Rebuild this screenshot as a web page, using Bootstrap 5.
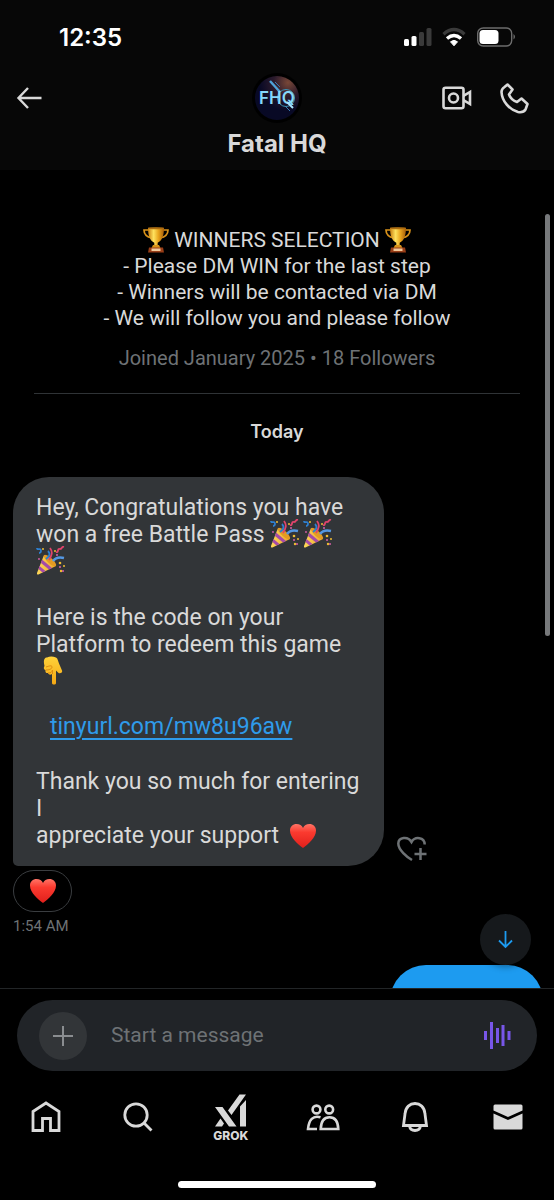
<!DOCTYPE html>
<html lang="en" data-bs-theme="dark">
<head>
<meta charset="utf-8">
<meta name="viewport" content="width=device-width, initial-scale=1">
<title>Fatal HQ</title>
<link href="https://cdn.jsdelivr.net/npm/bootstrap@5.3.0/dist/css/bootstrap.min.css" rel="stylesheet">
<style>
  body { background: #000; color: #d9d9d9; font-family: Roboto, "Liberation Sans", sans-serif; font-size: 23px; line-height: 27px; }
  svg { display: block; }
  .plain { background: none; border: 0; padding: 0; color: inherit; }
  .topbar { background: #070707; height: 170px; }
  .status { height: 74px; padding: 0 38px 0 59px; color: #fff; }
  .clock { font-family: Inter, sans-serif; font-weight: 600; font-size: 24px; }
  .side { width: 88px; }
  .titlebar { padding: 0 25px 0 16px; height: 48px; }
  .side-start { width: 97px; }
  .person { font-family: Inter, sans-serif; font-size: 24px; font-weight: 700; line-height: 28px; margin-top: 8px; }
  .bio { line-height: 26px; font-size: 21px; padding-top: 57px; }
  .dim { color: #6e7275; }
  .joined { font-size: 20px; line-height: 26px; margin-top: 14px; }
  .divider { border-top: 1px solid #2f3336; margin: 22px 34px 0; }
  .day { font-family: Inter, sans-serif; font-size: 18px; font-weight: 600; margin-top: 24px; }
  .bubble { width: 67%; margin: 32px 0 0 13px; padding: 17px 10px 17px 23px; background: #323538; border-radius: 36px 36px 36px 5px; }
  .bubble p { margin: 0 0 28px; }
  .bubble p:first-child { margin-bottom: 29px; }
  .bubble p:last-child { margin: 0; }
  .bubble a { color: #2f9bea; margin-left: 14px; text-decoration-thickness: 2px; text-underline-offset: 4px; }
  .emo { display: inline-block; width: 29px; height: 29px; margin-top: -5px; vertical-align: -6px; }
  .emo-gap { margin-right: 4px; }
  .emo-sm { width: 26px; height: 26px; }
  .react-add { margin: 0 0 4px 13px; }
  .reaction { width: 59px; height: 42px; border: 1px solid #3a3d40; border-radius: 21px; background: #000; margin: 4px 0 0 13px; }
  .stamp { font-size: 15px; line-height: 20px; margin: 4px 0 0 13px; }
  .reply { width: 153px; height: 72px; margin: 29px 11px 0 auto; background: #1d9bf0; border-radius: 36px; }
  .jump { right: 23px; bottom: 23px; width: 51px; height: 51px; background: #16191c; color: #1d9bf0; box-shadow: 0 2px 6px rgba(0,0,0,.35); }
  .thumb { right: 4px; top: 44px; width: 5px; height: 422px; background: #77797b; }
  .composer { border-top: 1px solid #222527; padding: 11px 17px 0; }
  .field { height: 71px; background: #212428; padding: 0 26px 0 22px; border-radius: 36px; }
  .add { width: 48px; height: 48px; background: #323538; color: #8a8d90; }
  .field input { background: none; border: 0; outline: 0; color: inherit; font-size: 21px; padding: 0 0 0 24px; min-width: 0; }
  .field input::placeholder { color: #6e7275; opacity: 1; }
  .tabs { height: 110px; padding-top: 20px; }
  .tabs a { color: #d9d9d9; height: 52px; }
  .grok { font-family: Inter, sans-serif; font-size: 12px; font-weight: 800; line-height: 14px; margin-top: 2px; }
  .homebar { width: 198px; height: 7px; border-radius: 4px; background: #fff; margin: 0 auto 12px; }
</style>
</head>
<body>
<svg width="0" height="0" class="position-absolute" aria-hidden="true">
  <defs>
    <linearGradient id="gold"><stop offset="0" stop-color="#c87d10"/><stop offset=".35" stop-color="#ffe25e"/><stop offset=".65" stop-color="#e9a51d"/><stop offset="1" stop-color="#a85d08"/></linearGradient>
    <linearGradient id="red" x2="0" y2="1"><stop offset="0" stop-color="#ff7466"/><stop offset=".35" stop-color="#fb3a2f"/><stop offset="1" stop-color="#e0201c"/></linearGradient>
    <linearGradient id="cone"><stop offset="0" stop-color="#ffd95a"/><stop offset="1" stop-color="#eba52a"/></linearGradient>
    <linearGradient id="skin" x2="0" y2="1"><stop offset="0" stop-color="#ffd23a"/><stop offset="1" stop-color="#f5a814"/></linearGradient>
    <symbol id="trophy" viewBox="0 0 26 26">
      <path d="M6 3H1c0 5 3 7 8 8M20 3h5c0 5-3 7-8 8" fill="none" stroke="#d9921a" stroke-width="1.7"/>
      <path d="M5 0.8h16c0 8-2 13-6.300 15v3h-3.400v-3C7 13.800 5 8.800 5 .8Z" fill="url(#gold)"/>
      <ellipse cx="13" cy="1.200" rx="8" ry="1" fill="#ad6c10"/>
      <path d="M10 18h6l1.500 3h-9Z" fill="#d9921a"/><path d="M6 20.500h14l1 5H5Z" fill="#9a3e17"/><path d="M8.500 21.500h9v2.500h-9Z" fill="#f2c99a"/>
    </symbol>
    <symbol id="party" viewBox="0 0 29 29">
      <path d="M8 9 20 20 2.500 28.400Q.5 29 1 27Z" fill="url(#cone)"/>
      <path d="m6 13.500 10 8.500-3 1.500L5 17ZM3.500 20l6 5-3 1.400-4-3.400Z" fill="#a54ba8"/>
      <ellipse cx="14" cy="14.500" rx="8" ry="2.600" transform="rotate(42 14 14.500)" fill="#e39b23"/>
      <path d="M10 13c3-2 5-5 2-8M1 2c0 3 4-1 4 3 0 2-2 2-2 2" fill="none" stroke="#2e7fd0" stroke-width="1.800"/>
      <path d="M13 14c3-5 4-8 1-12M20 6c3 1 1-4 4-3 3 0 1-3 4-2" fill="none" stroke="#e0446c" stroke-width="1.800"/>
      <path d="M17 15c3-4 7-4 11-3" fill="none" stroke="#5497e2" stroke-width="2.400"/>
      <g fill="#f0bc32"><circle cx="7" cy="3" r="1"/><circle cx="24" cy="17" r="1.300"/><circle cx="28" cy="20" r="1"/><circle cx="25" cy="25" r="1.200"/><circle cx="19" cy="5" r="1"/></g>
      <g fill="#d95fa8"><circle cx="27" cy="25" r="1"/><circle cx="3" cy="13" r=".9"/><circle cx="21" cy="9" r="1"/><circle cx="24" cy="21" r="1"/></g>
    </symbol>
    <symbol id="point" viewBox="0 0 29 29">
      <path transform="translate(2)" d="M9 1.500q4-2 9 0c2 1 2 4 3 6l3 7c1 2-2 4-4 2l-2-2V27c0 2-4 2-4 0v-9c-2 1.500-4 0-4-1-2 .5-3-1-2.500-3-2-.5-2-2.500-1-4-1-4-1-7 1.500-8.500Z" fill="url(#skin)"/>
      <path transform="translate(2)" d="M8 11c3-1 6-2 6 0s-3 3-6 3M10 17c3 0 4-1 4.500-3M14.500 18v-4" fill="none" stroke="#dc8c10"/>
    </symbol>
    <symbol id="heart" viewBox="0 0 26 26"><path d="M13 25C8 21 0 15 0 7.500 0 3.500 3 1 6.500 1 9.500 1 12 2.500 13 5c1-2.500 3.500-4 6.500-4C23 1 26 3.500 26 7.500 26 15 18 21 13 25Z" fill="url(#red)"/></symbol>
  </defs>
</svg>

<div class="d-flex flex-column vh-100 overflow-hidden">
  <header class="topbar flex-shrink-0">
    <div class="status d-flex align-items-center justify-content-between">
      <span class="clock">12:35</span>
      <div class="d-flex align-items-center" aria-label="Signal, Wi-Fi and battery">
        <svg class="me-2" width="30" height="20" viewBox="0 0 30 20"><g fill="#fff"><rect x="0" y="12" width="5" height="7" rx="1.500"/><rect x="7.500" y="9" width="5" height="10" rx="1.500"/></g><g fill="#3a3a3a"><rect x="15" y="5" width="5" height="14" rx="1.500"/><rect x="22.500" y="1" width="5" height="18" rx="1.500"/></g></svg>
        <svg class="me-2" width="26" height="20" viewBox="0 0 26 20" fill="none" stroke-width="3.400"><path d="M1.500 7.200Q12-2 22.500 7.200" stroke="#3a3a3a"/><path d="M5 11.500q7-6 14 0" stroke="#fff"/><path d="M8.500 14.800q3.500-3 7 0l-3.500 4Z" fill="#fff" stroke="#fff" stroke-width="1"/></svg>
        <svg width="40" height="20" viewBox="0 0 40 20"><rect x="1.700" y="1" width="34" height="18" rx="5.500" fill="none" stroke="#6c6c6c" stroke-width="1.400"/><rect x="3.500" y="3" width="19" height="14" rx="3.500" fill="#fff"/><path d="M37.500 7q3 2.700 0 5.500Z" fill="#6c6c6c"/></svg>
      </div>
    </div>
    <div class="titlebar d-flex align-items-center justify-content-between">
      <div class="side-start d-flex align-items-center"><button class="plain" aria-label="Back"><svg width="26" height="22" viewBox="0 0 26 22" fill="none" stroke="currentColor" stroke-width="2.400"><path d="M12 1 2.500 11 12 21M3 11h22.500"/></svg></button></div>
      <svg width="50" height="50" viewBox="0 0 50 50" role="img" aria-label="Fatal HQ avatar">
        <defs><radialGradient id="sky" cx=".75" cy=".15" r=".65"><stop offset="0" stop-color="#784737"/><stop offset=".5" stop-color="#2b1a2c"/><stop offset="1" stop-color="#080925"/></radialGradient></defs>
        <circle cx="25" cy="25" r="25" fill="#000"/><circle cx="25" cy="25" r="22" fill="url(#sky)"/>
        <path d="m18 8 10 11" stroke="#4fa3d8" stroke-width="2.400"/><path d="m23 9 5 5M33 33l5 5" stroke="#3a78b0" stroke-width="1"/>
        <circle cx="34" cy="25" r="8.500" fill="none" stroke="#3a91b5" stroke-width="1"/>
        <text x="7" y="31" font-family="Inter, sans-serif" font-size="17" font-weight="600" fill="#86d8fa">FHQ</text><path d="m35 29 6 6" stroke="#a9e4ff" stroke-width="2"/>
      </svg>
      <div class="side d-flex justify-content-between align-items-center">
        <button class="plain" aria-label="Video call"><svg width="31" height="24" viewBox="0 0 31 24" fill="none" stroke="currentColor" stroke-width="2.600"><rect x="2.500" y="1.700" width="20" height="20.500" rx="2"/><circle cx="12.500" cy="12" r="4.500"/><path d="M22.500 9.800 29 6v12l-6.500-3.800"/></svg></button>
        <button class="plain" aria-label="Audio call"><svg width="29" height="31" viewBox="0 0 29 31" fill="none" stroke="currentColor" stroke-width="2.600" stroke-linejoin="round"><path d="M7.500 1.500 12.500 6.500 9 11.500c1.500 4 4.500 6.500 8 7.500l4.500-3.500 6 5.500-2 5.500c-1.500 2.500-4.500 3-7.500 2.500C9 26.500 2 18 1.500 9c0-3 1.500-4 3-5Z"/></svg></button>
      </div>
    </div>
    <div class="person text-center">Fatal HQ</div>
  </header>

  <main class="flex-fill overflow-hidden position-relative">
    <div class="bio text-center">
      <svg class="emo emo-sm" role="img" aria-label="🏆"><use href="#trophy"/></svg> WINNERS SELECTION <svg class="emo emo-sm" role="img" aria-label="🏆"><use href="#trophy"/></svg><br>
      - Please DM WIN for the last step<br>
      - Winners will be contacted via DM<br>
      - We will follow you and please follow
    </div>
    <div class="joined dim text-center">Joined January 2025 • 18 Followers</div>
    <div class="divider"></div>
    <div class="day text-center">Today</div>
    <div class="d-flex align-items-end">
      <div class="bubble">
        <p>Hey, Congratulations you have<br>won a free Battle Pass <svg class="emo emo-gap" role="img" aria-label="🎉"><use href="#party"/></svg><svg class="emo" role="img" aria-label="🎉"><use href="#party"/></svg><br><svg class="emo" role="img" aria-label="🎉"><use href="#party"/></svg></p>
        <p>Here is the code on your<br>Platform to redeem this game<br><svg class="emo" role="img" aria-label="👇"><use href="#point"/></svg></p>
        <p><a href="#">tinyurl.com/mw8u96aw</a></p>
        <p>Thank you so much for entering<br>I<br>appreciate your support &nbsp;<svg class="emo emo-sm" role="img" aria-label="❤️"><use href="#heart"/></svg></p>
      </div>
      <button class="plain dim react-add" aria-label="Add reaction"><svg width="30" height="26" viewBox="0 0 30 26" fill="none" stroke="currentColor" stroke-width="2.500"><path d="M15 24C10 21 1.300 14 1.300 7.500 1.500 1 11 0 14.500 6 18 0 27.500 1 27.700 8.500M23.500 12v12M17.500 18h12"/></svg></button>
    </div>
    <button class="reaction p-0 d-flex align-items-center justify-content-center" aria-label="Heart reaction"><svg width="26" height="26"><use href="#heart"/></svg></button>
    <div class="stamp dim">1:54 AM</div>
    <div class="reply"></div>
    <button class="plain jump position-absolute rounded-circle d-flex align-items-center justify-content-center" aria-label="Scroll to latest"><svg width="15" height="18" viewBox="0 0 15 18" fill="none" stroke="currentColor" stroke-width="1.800"><path d="M7.500 0v16M1 9.500l6.500 6.500L14 9.500"/></svg></button>
    <div class="thumb position-absolute rounded-pill"></div>
  </main>

  <footer class="flex-shrink-0">
    <div class="composer">
      <div class="field d-flex align-items-center">
        <button class="plain add rounded-circle d-flex align-items-center justify-content-center flex-shrink-0" aria-label="Add attachment"><svg width="20" height="20" viewBox="0 0 20 20" stroke="currentColor" stroke-width="2"><path d="M10 0v20M0 10h20"/></svg></button>
        <input class="flex-fill" type="text" placeholder="Start a message" aria-label="Start a message">
        <button class="plain" aria-label="Voice message"><svg width="27" height="27" viewBox="0 0 27 27" fill="#7856e8"><path d="M0 9h3v9H0ZM6 0h3v27H6ZM12 6h3v15h-3ZM17.500 3h3v21h-3ZM23.500 9h3v9h-3Z"/></svg></button>
      </div>
    </div>
    <nav class="tabs row g-0" aria-label="Main">
      <a href="#" class="col d-flex align-items-center justify-content-center" aria-label="Home"><svg width="30" height="32" viewBox="0 0 30 32" fill="none" stroke="currentColor" stroke-width="2.800"><path d="M2 10.500 15 2l13 8.500V29.500h-8.500v-12h-8v12H2Z"/></svg></a>
      <a href="#" class="col d-flex align-items-center justify-content-center" aria-label="Search"><svg width="30" height="30" viewBox="0 0 30 30" fill="none" stroke="currentColor" stroke-width="2.800"><circle cx="13" cy="13" r="11.200"/><path d="m21 21 7.500 7.500"/></svg></a>
      <a href="#" class="col d-flex flex-column align-items-center justify-content-end text-decoration-none" aria-label="Grok"><svg width="32" height="33" viewBox="0 0 32 33" fill="currentColor"><path d="M0 13h7.500l14 19.500H14ZM0 32.500 5.500 24.500 9 29.500 7 32.500ZM13 16.500 24.500.5h6.500L16.500 21ZM25 12.500 31 6v26.500h-6Z"/></svg><span class="grok">GROK</span></a>
      <a href="#" class="col d-flex align-items-center justify-content-center" aria-label="Communities"><svg width="34" height="28" viewBox="0 0 34 28" fill="none" stroke="currentColor" stroke-width="2.600"><circle cx="10.500" cy="6.500" r="3.900"/><circle cx="23.200" cy="6.500" r="3.900"/><path d="M14.500 14.300C7 12 2.800 17 2 26h9M14.700 26C15 18 18 14.200 23.500 14.200S32 18 32.300 26Z"/></svg></a>
      <a href="#" class="col d-flex align-items-center justify-content-center" aria-label="Notifications"><svg width="28" height="32" viewBox="0 0 28 32" fill="none" stroke="currentColor" stroke-width="2.800"><path d="M2.500 24.500 4 13C4.500 6 9 2.500 14 2.500s9.500 3.500 10 10.500l1.500 11.500ZM8.500 25c1 6 10 6 11 0"/></svg></a>
      <a href="#" class="col d-flex align-items-center justify-content-center" aria-label="Messages"><svg width="30" height="26" viewBox="0 0 30 26" fill="currentColor"><path d="M.5 6.500V2Q.5.500 2 .5h26q1.500 0 1.500 1.500v4.500L15 13ZM.5 9.500 15 16l14.500-6.500V24q0 1.500-1.500 1.500H2Q.5 25.500.5 24Z"/></svg></a>
    </nav>
    <div class="homebar"></div>
  </footer>
</div>
<script src="https://cdn.jsdelivr.net/npm/bootstrap@5.3.0/dist/js/bootstrap.bundle.min.js"></script>
</body>
</html>
